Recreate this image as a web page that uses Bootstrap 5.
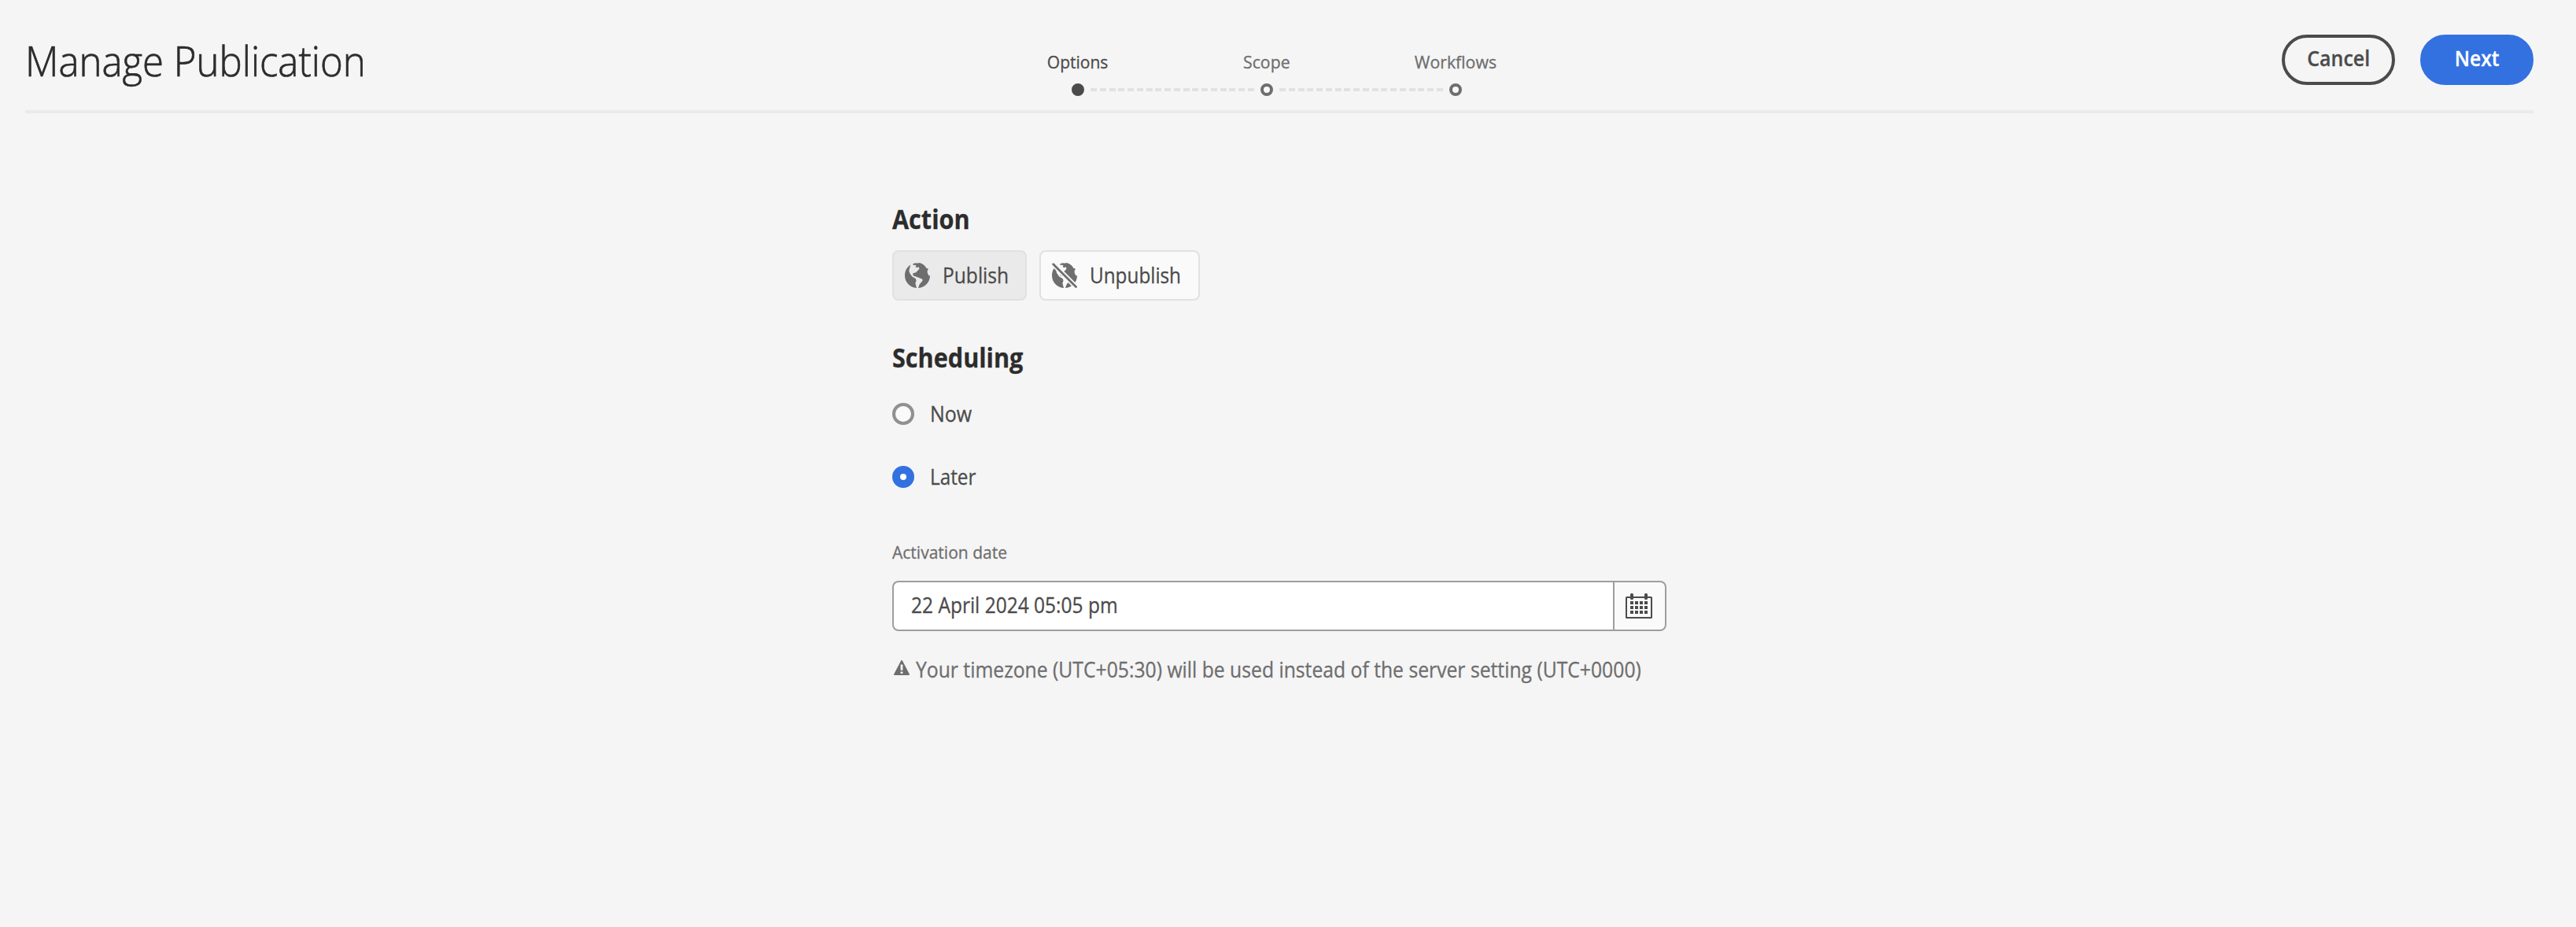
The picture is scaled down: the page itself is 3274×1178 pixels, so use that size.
<!DOCTYPE html>
<html lang="en">
<head>
<meta charset="utf-8">
<title>Manage Publication</title>
<link rel="stylesheet" href="https://cdn.jsdelivr.net/npm/bootstrap@5.3.0/dist/css/bootstrap.min.css">
<style>
body{background:#f5f5f5;color:#4b4b4b;font-family:"Open Sans","Noto Sans",sans-serif;font-size:27px;line-height:40px;white-space:nowrap;-webkit-text-stroke:.3px currentColor}
/* horizontal condensing of the type */
.fit{display:inline-block;transform:scaleX(var(--fit,.91));transform-origin:0 50%}
.fit-mid{transform-origin:50% 50%}
.fit-90{--fit:.9}
.fit-92{--fit:.925}
.fit-93{--fit:.9325}
.fit-95{--fit:.956}
.fit-97{--fit:.967}
.topbar{height:140px;margin-right:54px}
.side{flex:1 1 0}
.actions{gap:32px;padding-top:44px}
.page-title{font-size:54px;font-weight:300;line-height:64px;color:#2c2c2c;margin:44px 0 0 32px;-webkit-text-stroke:.7px #2c2c2c}
.steps{width:720px;padding-top:63px}
.step-name{width:240px;font-size:22px;line-height:30px;color:#6e6e6e;text-align:center}
.step-name.current{color:#4b4b4b}
.track{padding:0 112px;margin-top:13px}
.dot{width:16px;height:16px;border:4px solid #6e6e6e;border-radius:50%;background:#fafafa;flex:none}
.dot.current{border-color:#4b4b4b;background:#4b4b4b}
.dashes{height:4px;margin:0 8px;flex:1;background:repeating-linear-gradient(90deg,#e1e1e1 0 8px,transparent 8px 11.765px)}
.pill{width:144px;height:64px;padding:0;border:4px solid #4b4b4b;border-radius:32px;font-size:27px;font-weight:600;line-height:40px;color:#4b4b4b}
.pill .fit{margin-top:-4px}
.pill.primary{background:#3371e0;border-color:#3371e0;color:#fff}
.rule{height:4px;margin:0 54px 0 32px;background:#eaeaea}
.panel{width:984px;margin-left:1134px;padding-top:114px}
.sec{font-size:34px;font-weight:700;line-height:40px;color:#2c2c2c;margin:0}
.acts{margin:20px 0 52px;gap:16px}
.act{width:171px;height:64px;border:2px solid #e1e1e1;border-radius:8px;background:#fafafa;padding:0 0 0 14px;font-size:27px;line-height:40px;color:#4b4b4b}
.act.wide{width:204px}
.act.chosen{background:#eaeaea;border-color:#e1e1e1}
.act svg{width:32px;height:32px;margin-right:16px;flex:none}
.opts{margin-top:32px;gap:40px}
.opt{height:40px;gap:20px}
.knob{width:28px;height:28px;border:4px solid #909090;border-radius:50%;background:#fafafa}
.knob.on{border:10px solid #3371e0;background:#fff}
.date-label{font-size:22px;line-height:30px;color:#6e6e6e;margin:60px 0 22px;display:block}
.date-box{height:64px}
.date-box .form-control{border:2px solid #9e9e9e;border-right:0;border-radius:8px 0 0 8px;background:#fff;color:#4b4b4b;font-size:26.5px;line-height:40px;padding:9px 0 0 22px}
.date-box .cal{width:68px;padding:0 0 0 14px;border:2px solid #9e9e9e;border-radius:0 8px 8px 0;background:#fafafa}
.cal svg{width:34px;height:32px}
.hint{font-size:26.5px;color:#6e6e6e;margin-top:29px}
.hint svg{width:20px;height:19px;margin:8px 8px 0 2px;flex:none}
</style>
</head>
<body>
<header>
  <div class="topbar d-flex">
    <div class="side"><h1 class="page-title"><span class="fit">Manage Publication</span></h1></div>
    <div class="steps">
      <div class="d-flex">
        <div class="step-name current"><span class="fit fit-mid fit-95">Options</span></div>
        <div class="step-name"><span class="fit fit-mid fit-97">Scope</span></div>
        <div class="step-name"><span class="fit fit-mid fit-97">Workflows</span></div>
      </div>
      <div class="track d-flex align-items-center">
        <span class="dot current"></span><span class="dashes"></span><span class="dot"></span><span class="dashes"></span><span class="dot"></span>
      </div>
    </div>
    <div class="side actions d-flex justify-content-end align-items-start">
      <button class="btn pill d-flex align-items-center justify-content-center" type="button"><span class="fit fit-mid fit-92">Cancel</span></button>
      <button class="btn pill primary d-flex align-items-center justify-content-center" type="button"><span class="fit fit-mid">Next</span></button>
    </div>
  </div>
  <div class="rule"></div>
</header>
<main class="panel">
  <h2 class="sec"><span class="fit fit-90">Action</span></h2>
  <div class="acts d-flex">
    <button class="btn act chosen d-flex align-items-center" type="button">
      <svg viewBox="0 0 32 32" fill="#6e6e6e"><path id="land" d="M7.3 2.6C2.9 5.3 0 10.3 0 16c0 8.8 6.6 15.4 15 16L13.4 26l1.1-3.3-.6-2.4-4.6-2.900-3-4.100L5.300 10zM10 1.600L12.500.500 14.500.300 16 .800 17.500 0C21.500.200 25.500 2.800 27.300 6.800L28.600 7 30 8 28.600 10 28.800 13 30.500 16.500 32 16C32 24.800 25.500 31.500 17 32L18.600 27.600 22.600 22.600 22.300 20.800 14.300 17.600 10.900 16.600 10 13.600 14 12.200 18.500 7.800 17.400 4.800 16.200 6.300 13.600 5.200 14.500 2.900 10.700 2.800z"/></svg>
      <span class="fit">Publish</span>
    </button>
    <button class="btn act wide d-flex align-items-center" type="button">
      <svg viewBox="0 0 32 32" fill="#6e6e6e"><use href="#land"/><path d="M-1-1 33 33" stroke="#fafafa" stroke-width="6.4"/><path d="M1.7 1.7L30.5 30.5" stroke="#6e6e6e" stroke-width="2.800" stroke-linecap="round"/></svg>
      <span class="fit fit-90">Unpublish</span>
    </button>
  </div>
  <h2 class="sec"><span class="fit fit-90">Scheduling</span></h2>
  <div class="opts d-flex flex-column">
    <div class="opt d-flex align-items-center"><span class="knob"></span><span class="fit fit-92">Now</span></div>
    <div class="opt d-flex align-items-center"><span class="knob on"></span><span class="fit fit-90">Later</span></div>
  </div>
  <label class="date-label"><span class="fit fit-95">Activation date</span></label>
  <div class="date-box input-group flex-nowrap">
    <div class="form-control"><span class="fit fit-92">22 April 2024 05:05 pm</span></div>
    <button class="btn cal d-flex align-items-center" type="button">
      <svg viewBox="0 0 34 32" fill="#4b4b4b"><rect x="1" y="5" width="32" height="26" rx=".6" fill="none" stroke="#4b4b4b" stroke-width="2"/><rect x="6" width="4" height="8" rx="1.5"/><rect x="24" width="4" height="8" rx="1.5"/><path d="M6 10h4v4H6zm6 0h4v4h-4zm6 0h4v4h-4zm6 0h4v4h-4zM6 16h4v4H6zm6 0h4v4h-4zm6 0h4v4h-4zm6 0h4v4h-4zM6 22h4v4H6zm6 0h4v4h-4zm6 0h4v4h-4zm6 0h4v4h-4z"/></svg>
    </button>
  </div>
  <div class="hint d-flex align-items-start">
    <svg viewBox="0 0 20 19" fill="#6e6e6e"><path d="M9.2.6a1 1 0 0 1 1.7 0l9 17.2a.8.8 0 0 1-.7 1.2H.8a.8.8 0 0 1-.7-1.2z"/><path d="M8.6 5.5h2.8v7.3H8.6zM8.6 14.4h2.8v2.6H8.6z" fill="#f5f5f5"/></svg>
    <span class="fit fit-93">Your timezone (UTC+05:30) will be used instead of the server setting (UTC+0000)</span>
  </div>
</main>
<script src="https://cdn.jsdelivr.net/npm/bootstrap@5.3.0/dist/js/bootstrap.bundle.min.js"></script>
</body>
</html>
